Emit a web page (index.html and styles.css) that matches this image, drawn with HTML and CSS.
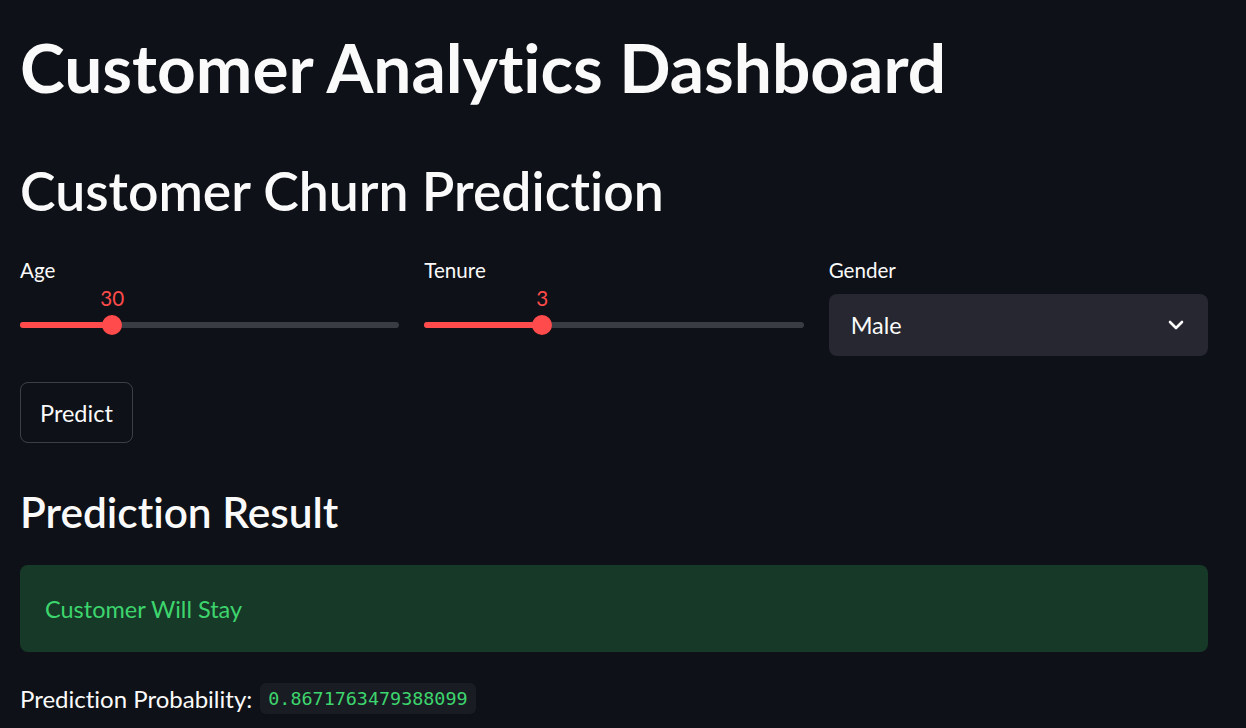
FILE: index.html
```html
<!DOCTYPE html>
<html lang="en">
<head>
  <meta charset="UTF-8">
  <meta name="viewport" content="width=device-width, initial-scale=1.0">
  <title>Customer Analytics Dashboard</title>
  <link rel="stylesheet" href="styles.css">
</head>
<body>
  <main class="app">
    <h1 class="title">Customer Analytics Dashboard</h1>
    <h2 class="header">Customer Churn Prediction</h2>

    <div class="inputs">
      <div class="field">
        <label class="field-label">Age</label>
        <div class="slider">
          <div class="slider-values">
            <span class="slider-value" style="left: 24.3%">30</span>
          </div>
          <div class="slider-track">
            <div class="slider-fill" style="width: 24.3%"></div>
            <div class="slider-thumb" style="left: 24.3%"></div>
          </div>
        </div>
      </div>

      <div class="field">
        <label class="field-label">Tenure</label>
        <div class="slider">
          <div class="slider-values">
            <span class="slider-value" style="left: 31.1%">3</span>
          </div>
          <div class="slider-track">
            <div class="slider-fill" style="width: 31.1%"></div>
            <div class="slider-thumb" style="left: 31.1%"></div>
          </div>
        </div>
      </div>

      <div class="field">
        <label class="field-label">Gender</label>
        <div class="select">
          <span>Male</span>
          <svg class="chevron" width="16" height="10" viewBox="0 0 16 10">
            <polyline points="2,2 8,8 14,2" fill="none" stroke="#fafafa" stroke-width="2.6" stroke-linecap="round" stroke-linejoin="round"/>
          </svg>
        </div>
      </div>
    </div>

    <button class="btn">Predict</button>

    <h3 class="subheader">Prediction Result</h3>

    <div class="alert-success">Customer Will Stay</div>

    <p class="prob">Prediction Probability: <code>0.8671763479388099</code></p>
  </main>
</body>
</html>
```

FILE: styles.css
```css
body {
  margin: 0;
  background: #0e1117;
  color: #fafafa;
  font-family: 'Lato', 'Noto Sans', sans-serif;
  font-variant-ligatures: none;
}
.app {
  padding: 26px 38px 0 20px;
}
.title {
  margin: 0;
  font-size: 67.6px;
  font-weight: 700;
  line-height: 1.2;
}
.header {
  margin: 51px 0 0;
  font-size: 53.5px;
  font-weight: 600;
  line-height: 1.2;
}
.inputs {
  display: grid;
  grid-template-columns: repeat(3, 1fr);
  gap: 25px;
  margin-top: 33px;
}
.field-label {
  display: block;
  font-size: 20.6px;
  line-height: 30px;
}
.slider-values {
  position: relative;
  height: 30px;
  margin-top: -2px;
}
.slider-value {
  position: absolute;
  top: 0;
  transform: translateX(-50%);
  color: #ff4b4b;
  font-size: 20.6px;
  line-height: 30px;
}
.slider-track {
  position: relative;
  height: 6px;
  margin-top: 9px;
  border-radius: 3px;
  background: #3a3c44;
}
.slider-fill {
  height: 100%;
  border-radius: 3px;
  background: #ff4b4b;
}
.slider-thumb {
  position: absolute;
  top: 50%;
  width: 20px;
  height: 20px;
  border-radius: 50%;
  background: #ff4b4b;
  transform: translate(-50%, -50%);
}
.select {
  display: flex;
  align-items: center;
  justify-content: space-between;
  height: 62px;
  margin-top: 9px;
  padding: 0 24px 0 22px;
  border-radius: 8px;
  background: #262730;
  font-size: 23.5px;
}
.btn {
  display: block;
  height: 61px;
  margin-top: 26px;
  padding: 0 19px;
  border: 1px solid rgba(250, 250, 250, 0.2);
  border-radius: 8px;
  background: transparent;
  color: #fafafa;
  font-family: inherit;
  font-size: 23.5px;
}
.subheader {
  margin: 44px 0 0;
  font-size: 42.4px;
  font-weight: 600;
  line-height: 1.2;
}
.alert-success {
  display: flex;
  align-items: center;
  height: 87px;
  margin-top: 27px;
  padding: 0 25px;
  border-radius: 8px;
  background: #173928;
  color: #3dd56d;
  font-size: 23.5px;
}
.prob {
  display: flex;
  align-items: center;
  gap: 8px;
  height: 31px;
  margin: 31px 0 0;
  font-size: 24px;
}
.prob code {
  padding: 0 8px;
  line-height: 31px;
  border-radius: 6px;
  background: #1a1c24;
  color: #3dd56d;
  font-family: 'DejaVu Sans Mono', 'Liberation Mono', monospace;
  font-size: 18.4px;
}
```
